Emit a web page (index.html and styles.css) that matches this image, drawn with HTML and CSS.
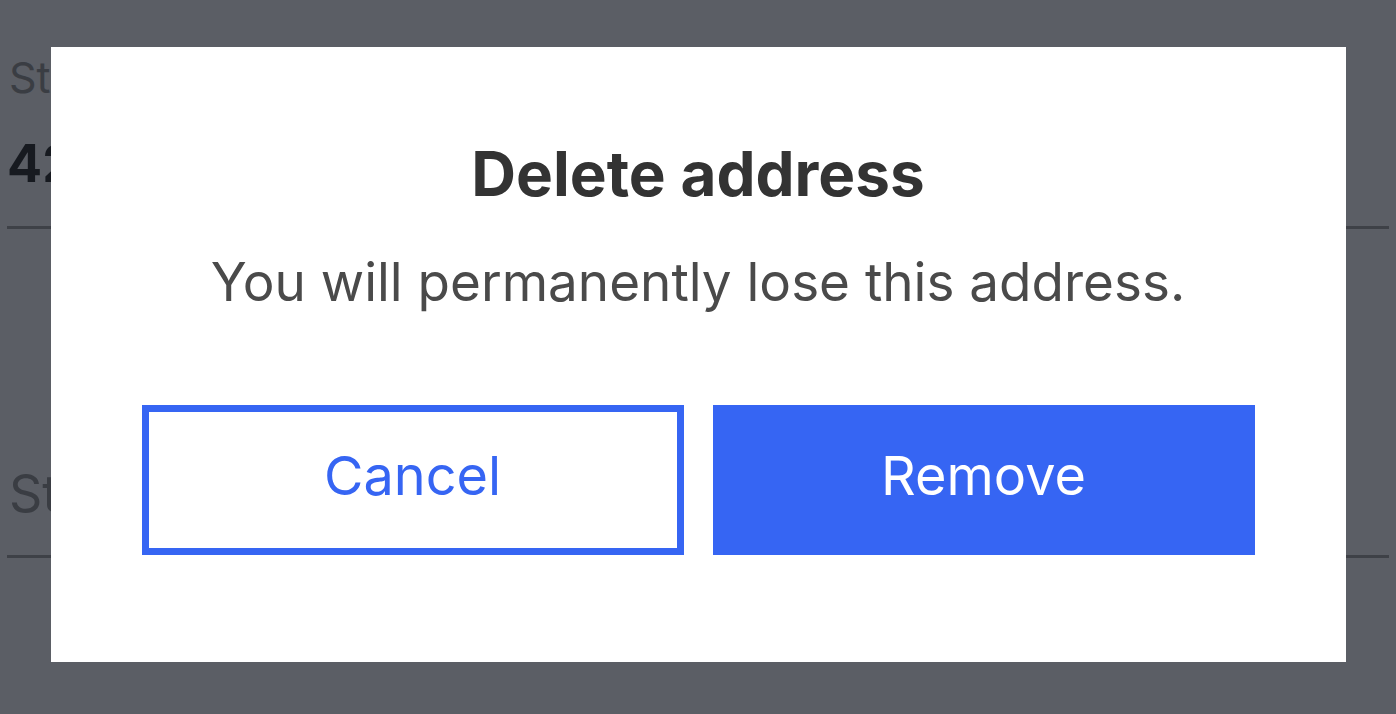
FILE: index.html
```html
<!DOCTYPE html>
<html lang="en">
<head>
<meta charset="utf-8">
<title>Delete address</title>
<link rel="stylesheet" href="styles.css">
</head>
<body>
<main class="page">
  <div class="field-label">Street</div>
  <div class="field-value">42</div>
  <div class="divider"></div>
  <div class="field-label field-label-lg">State</div>
  <div class="divider divider-second"></div>
</main>
<div class="overlay">
  <div class="dialog" role="dialog" aria-labelledby="dlg-title">
    <h2 class="dialog-title" id="dlg-title">Delete address</h2>
    <p class="dialog-text">You will permanently lose this address.</p>
    <div class="dialog-actions">
      <button class="btn btn-secondary" type="button">Cancel</button>
      <button class="btn btn-primary" type="button">Remove</button>
    </div>
  </div>
</div>
</body>
</html>
```
FILE: styles.css
```css
* { box-sizing: border-box; }
html, body {
  margin: 0;
  padding: 0;
  height: 100%;
}
body {
  background: #5b5e65;
  font-family: Inter, "Liberation Sans", sans-serif;
  overflow: hidden;
}
.page {
  padding: 51px 7px 0 7px;
}
.field-label {
  font-size: 43px;
  line-height: 52px;
  color: #3a3d43;
  padding-left: 2px;
}
.field-value {
  margin-top: 30px;
  font-size: 52px;
  line-height: 62px;
  font-weight: 700;
  color: #171a20;
}
.divider {
  margin-top: 31px;
  height: 3px;
  background: #3e4147;
}
.field-label-lg {
  margin-top: 234px;
  font-size: 52px;
  line-height: 62px;
}
.divider-second {
  margin-top: 30px;
}
.overlay {
  position: absolute;
  inset: 0;
  display: flex;
  justify-content: center;
  align-items: flex-start;
  padding-top: 47px;
}
.dialog {
  width: 1295px;
  height: 615px;
  background: #ffffff;
  padding: 91px 91px 0 91px;
  text-align: center;
}
.dialog-title {
  margin: 0;
  font-size: 62px;
  line-height: 72px;
  font-weight: 700;
  color: #333333;
}
.dialog-text {
  margin: 40px 0 0 0;
  font-size: 53px;
  line-height: 64px;
  color: #4a4a4a;
}
.dialog-actions {
  margin-top: 91px;
  display: grid;
  grid-template-columns: 1fr 1fr;
  gap: 29px;
}
.btn {
  height: 150px;
  font-family: inherit;
  font-size: 54px;
  display: flex;
  align-items: center;
  justify-content: center;
  padding: 0 0 10px 0;
  cursor: pointer;
}
.btn-secondary {
  background: #ffffff;
  color: #3665f3;
  border: 7px solid #3665f3;
}
.btn-primary {
  background: #3665f3;
  color: #ffffff;
  border: none;
}
```
